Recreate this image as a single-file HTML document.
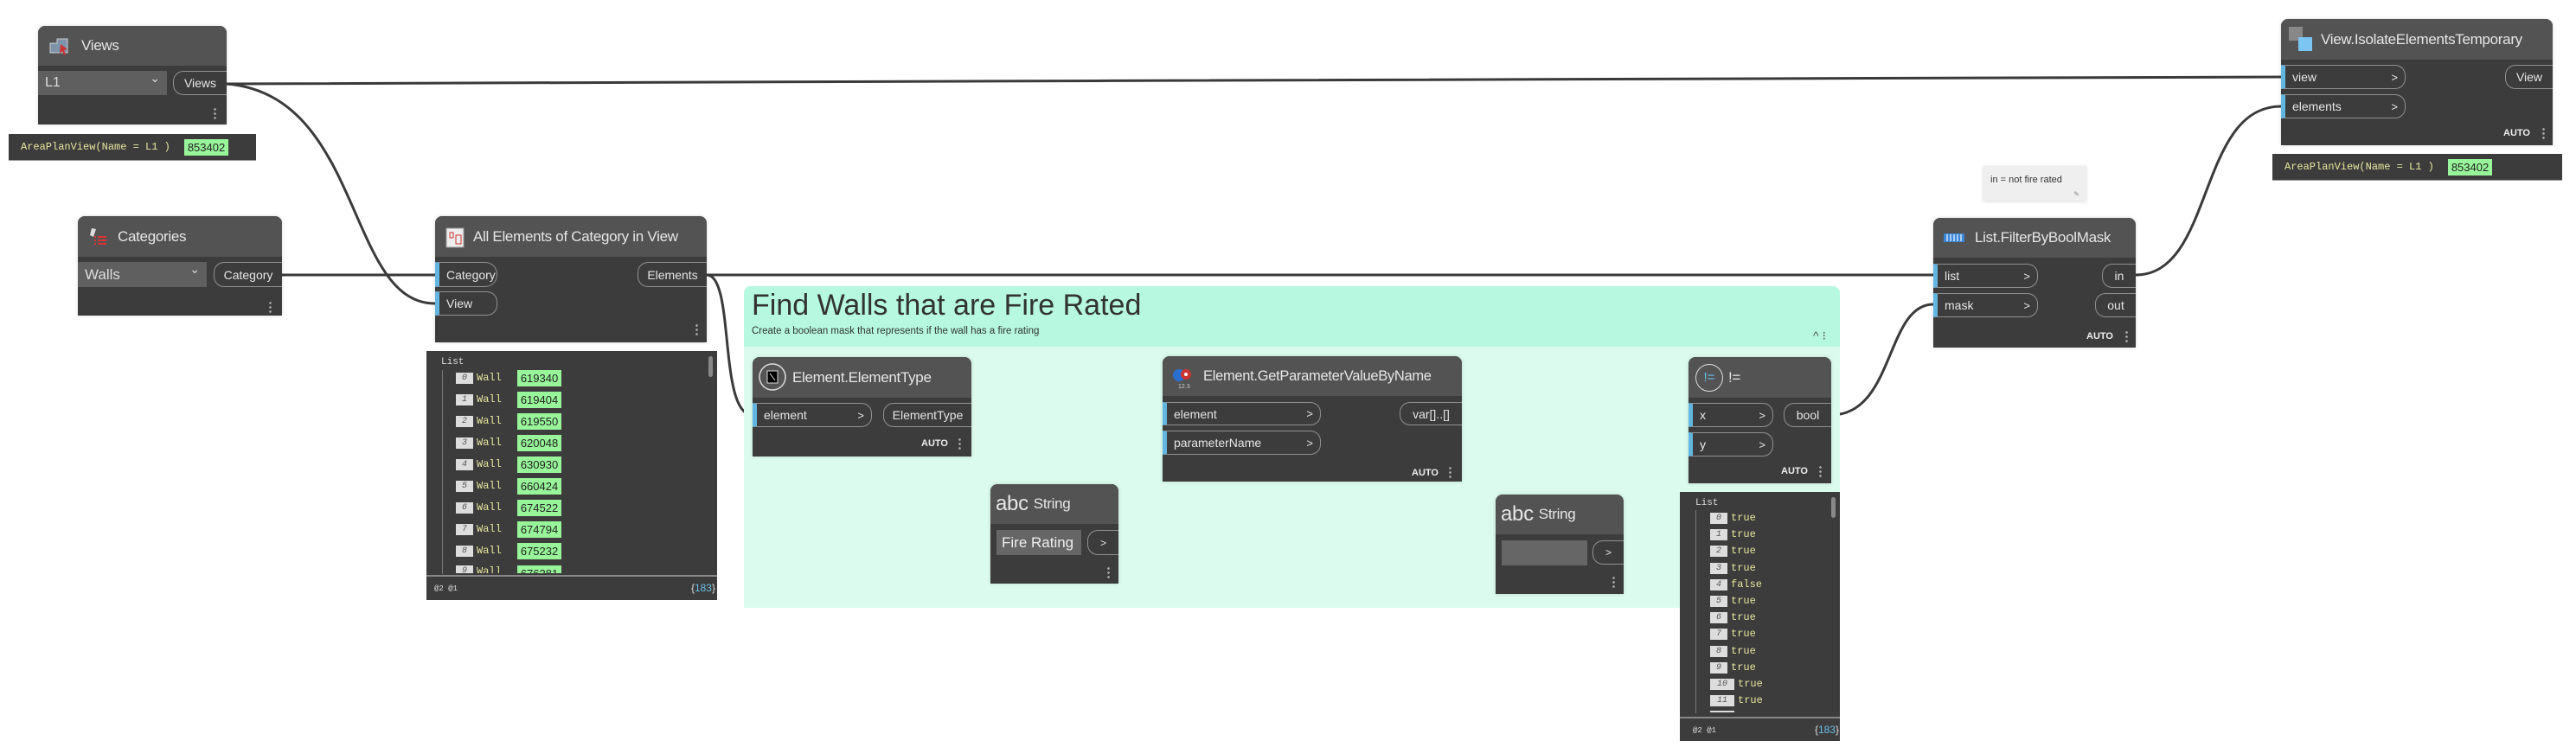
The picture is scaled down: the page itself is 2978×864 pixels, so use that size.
<!DOCTYPE html>
<html><head><meta charset="utf-8"><style>
*{box-sizing:border-box;margin:0;padding:0}
body{width:2978px;height:864px;background:#fff;position:relative;overflow:hidden;font-family:"Liberation Sans",sans-serif}
.a{position:absolute}
.node{position:absolute;background:#3c3c3c;border-radius:8px 8px 0 0;box-shadow:0 0 4px rgba(0,0,0,.15)}
.hd{position:absolute;left:0;right:0;top:0;background:#535353;border-radius:8px 8px 0 0;color:#e6e6e6;font-size:17px;display:flex;align-items:center;padding-left:14px;white-space:nowrap;letter-spacing:-0.3px}
.pin{position:absolute;border:1px solid #909090;border-left:5px solid #62b6e0;border-radius:0 12px 12px 0;color:#e6e6e6;font-size:14px;padding-left:8px;display:flex;align-items:center}
.pin:after{content:">";position:absolute;right:8px;font-size:13px}
.pin.n:after{content:""}
.pout{position:absolute;border:1px solid #909090;border-right:none;border-radius:12px 0 0 12px;color:#e6e6e6;font-size:14px;display:flex;align-items:center;justify-content:center}
.auto{position:absolute;color:#eee;font-size:11px;font-weight:bold}
.dots{position:absolute;width:3px;height:14px;background:radial-gradient(circle,#aaa 1.2px,transparent 1.5px) 0 0/3px 5px repeat-y}
.dd{position:absolute;background:#5f5f5f;color:#ddd;font-size:16px;display:flex;align-items:center;padding-left:8px}
.dd:after{content:"⌄";position:absolute;right:8px;top:0;font-size:14px}
.watch{position:absolute;background:#3c3c3c;color:#e8e8a0;font-family:"Liberation Mono",monospace;font-size:12px;display:flex;align-items:center;padding-left:14px;border-bottom:1px solid #999}
.g{background:#98f59a;color:#222;font-family:"Liberation Sans",sans-serif;padding:2px 4px;margin-left:18px;font-size:13px}
.list{position:absolute;background:#3c3c3c;font-family:"Liberation Mono",monospace;font-size:11px;color:#ddd}
.row{position:absolute;display:flex;align-items:center;height:16px}
.ix{background:#ddd;color:#555;font-style:italic;font-size:10px;width:20px;text-align:center;height:13px;line-height:13px;margin-right:4px}
.y{color:#e8e8a0;font-size:12px}
</style></head><body>

<svg class="a" style="left:0;top:0" width="2978" height="864" fill="none" stroke="#3a3a3a" stroke-width="3">
<path d="M262 97 C1000 95 2000 90 2637 89"/>
<path d="M262 97 C420 110 400 351 503 351"/>
<path d="M326 318 L503 318"/>
<path d="M817 318 C1400 318 1800 318 2235 318"/>
<path d="M817 318 C850 318 830 480 870 480"/>
<path d="M1123 480 L1344 479"/>
<path d="M1293 627 C1330 627 1310 512 1344 512"/>
<path d="M1690 479 L1952 480"/>
<path d="M1877 640 C1930 640 1900 514 1952 514"/>
<path d="M2117 480 C2190 480 2180 352 2235 352"/>
<path d="M2469 318 C2560 318 2540 123 2637 123"/>
</svg>

<!-- group -->
<div class="a" style="left:860px;top:331px;width:1267px;height:372px;background:#dbfbee;border-radius:8px 8px 0 0"></div>
<div class="a" style="left:860px;top:331px;width:1267px;height:70px;background:#b6f8e0;border-radius:8px 8px 0 0"></div>
<div class="a" style="left:869px;top:334px;font-size:34px;color:#333">Find Walls that are Fire Rated</div>
<div class="a" style="left:869px;top:377px;font-size:11.5px;color:#333">Create a boolean mask that represents if the wall has a fire rating</div>
<div class="a" style="left:2096px;top:380px;font-size:14px;color:#555">^ ⁝</div>

<!-- Views -->
<div class="node" style="left:44px;top:30px;width:218px;height:114px"><div class="hd" style="height:46px;padding-left:50px">Views</div>
<svg class="a" style="left:12px;top:12px" width="26" height="22"><path d="M2 8h8V3h12v16H2z" fill="#7c93aa" stroke="#ccc"/><path d="M14 9l8 6-4 1 2 5-2 1-2-5-3 3z" fill="#c33"/></svg>
<div class="dd" style="left:0;top:52px;width:149px;height:28px">L1</div>
<div class="pout" style="left:156px;top:52px;width:62px;height:28px">Views</div>
<div class="dots" style="left:203px;top:94px"></div></div>
<div class="watch" style="left:10px;top:155px;width:286px;height:31px">AreaPlanView(Name = L1 )<span class="g" style="margin-left:16px">853402</span></div>

<!-- Categories -->
<div class="node" style="left:90px;top:250px;width:236px;height:115px"><div class="hd" style="height:47px;padding-left:46px">Categories</div>
<svg class="a" style="left:12px;top:12px" width="26" height="24"><path d="M4 2l5 1-3 9-4-2z" fill="#ddd"/><path d="M11 12h10M11 16h10M11 20h10M7 12h2M7 16h2M7 20h2" stroke="#d33" stroke-width="2"/></svg>
<div class="dd" style="left:0;top:53px;width:149px;height:29px;font-size:17px">Walls</div>
<div class="pout" style="left:157px;top:53px;width:79px;height:29px">Category</div>
<div class="dots" style="left:221px;top:98px"></div></div>

<!-- All Elements -->
<div class="node" style="left:503px;top:250px;width:314px;height:146px"><div class="hd" style="height:47px;padding-left:44px">All Elements of Category in View</div>
<svg class="a" style="left:9px;top:12px" width="28" height="26"><rect x="4" y="2" width="20" height="22" fill="#eee" stroke="#999"/><path d="M8 7h4v6H8zM15 10h6v10h-6z" stroke="#c33" fill="none"/></svg>
<div class="pin n" style="left:0;top:53px;width:72px;height:29px;border-radius:0 14px 14px 0">Category</div>
<div class="pin n" style="left:0;top:87px;width:72px;height:28px">View</div>
<div class="pout" style="left:234px;top:53px;width:80px;height:29px">Elements</div>
<div class="dots" style="left:301px;top:124px"></div></div>

<!-- List 1 -->
<div class="list" style="left:493px;top:406px;width:336px;height:288px">
<div class="a" style="left:17px;top:7px">List</div>
<div class="a" style="left:18px;top:22px;width:1px;height:236px;background:#777"></div>
<div class="a" style="left:326px;top:6px;width:5px;height:24px;background:#888;border-radius:3px"></div>
<div class="row" style="left:34px;top:23px"><span class="ix">0</span><span class="y">Wall</span><span class="g">619340</span></div>
<div class="row" style="left:34px;top:48px"><span class="ix">1</span><span class="y">Wall</span><span class="g">619404</span></div>
<div class="row" style="left:34px;top:73px"><span class="ix">2</span><span class="y">Wall</span><span class="g">619550</span></div>
<div class="row" style="left:34px;top:98px"><span class="ix">3</span><span class="y">Wall</span><span class="g">620048</span></div>
<div class="row" style="left:34px;top:123px"><span class="ix">4</span><span class="y">Wall</span><span class="g">630930</span></div>
<div class="row" style="left:34px;top:148px"><span class="ix">5</span><span class="y">Wall</span><span class="g">660424</span></div>
<div class="row" style="left:34px;top:173px"><span class="ix">6</span><span class="y">Wall</span><span class="g">674522</span></div>
<div class="row" style="left:34px;top:198px"><span class="ix">7</span><span class="y">Wall</span><span class="g">674794</span></div>
<div class="row" style="left:34px;top:223px"><span class="ix">8</span><span class="y">Wall</span><span class="g">675232</span></div>
<div class="row" style="left:34px;top:248px;height:9px;overflow:hidden;align-items:flex-start"><span class="ix">9</span><span class="y">Wall</span><span class="g">676281</span></div>
<div class="a" style="left:0;top:259px;width:336px;height:2px;background:#888"></div>
<div class="a" style="left:9px;top:270px;font-size:9px">@2 @1</div>
<div class="a" style="right:2px;top:267px;font-size:12px;font-family:'Liberation Sans'">{<span style="color:#6ac0e7">183</span>}</div>
</div>

<!-- ElementType -->
<div class="node" style="left:870px;top:413px;width:253px;height:115px"><div class="hd" style="height:47px;padding-left:46px">Element.ElementType</div>
<svg class="a" style="left:6px;top:6px" width="34" height="34"><circle cx="17" cy="17" r="15" stroke="#ddd" stroke-width="1.5" fill="#555"/><path d="M11 10h12v14H11zM14 13l6 8" stroke="#ddd"/></svg>
<div class="pin" style="left:0;top:53px;width:138px;height:28px">element</div>
<div class="pout" style="left:151px;top:53px;width:102px;height:28px">ElementType</div>
<div class="auto" style="left:195px;top:94px">AUTO</div><div class="dots" style="left:238px;top:93px"></div></div>

<!-- String 1 -->
<div class="node" style="left:1145px;top:560px;width:148px;height:115px"><div class="hd" style="height:46px;padding-left:6px"><span style="font-size:24px;font-weight:300;margin-right:6px">abc</span>String</div>
<div class="a" style="left:7px;top:53px;width:98px;height:29px;background:#666;color:#eee;font-size:17px;padding-left:6px;line-height:29px;white-space:nowrap">Fire Rating</div>
<div class="pout" style="left:112px;top:53px;width:36px;height:29px;font-size:12px">&gt;</div>
<div class="dots" style="left:135px;top:95px"></div></div>

<!-- GetParameterValueByName -->
<div class="node" style="left:1344px;top:412px;width:346px;height:145px"><div class="hd" style="height:46px;padding-left:47px;font-size:16.5px">Element.GetParameterValueByName</div>
<svg class="a" style="left:10px;top:12px" width="26" height="26"><circle cx="9" cy="10" r="7" fill="#2a6fd0"/><circle cx="17" cy="9" r="6" fill="#c33"/><circle cx="17" cy="9" r="2" fill="#fff"/><text x="8" y="25" font-size="7" fill="#ccc">12.3</text></svg>
<div class="pin" style="left:0;top:53px;width:183px;height:27px">element</div>
<div class="pin" style="left:0;top:86px;width:183px;height:28px">parameterName</div>
<div class="pout" style="left:274px;top:53px;width:72px;height:27px">var[]..[]</div>
<div class="auto" style="left:288px;top:129px">AUTO</div><div class="dots" style="left:331px;top:127px"></div></div>

<!-- != -->
<div class="node" style="left:1952px;top:413px;width:165px;height:146px"><div class="hd" style="height:47px;padding-left:46px">!=</div>
<div class="a" style="left:8px;top:8px;width:32px;height:32px;border:1.5px solid #ddd;border-radius:50%;color:#6ac0e7;font-size:15px;text-align:center;line-height:29px">!=</div>
<div class="pin" style="left:0;top:53px;width:98px;height:28px">x</div>
<div class="pin" style="left:0;top:87px;width:98px;height:28px">y</div>
<div class="pout" style="left:110px;top:53px;width:55px;height:28px">bool</div>
<div class="auto" style="left:107px;top:126px">AUTO</div><div class="dots" style="left:151px;top:125px"></div></div>

<!-- String 2 -->
<div class="node" style="left:1729px;top:572px;width:148px;height:115px"><div class="hd" style="height:46px;padding-left:6px"><span style="font-size:24px;font-weight:300;margin-right:6px">abc</span>String</div>
<div class="a" style="left:7px;top:53px;width:99px;height:29px;background:#666"></div>
<div class="pout" style="left:112px;top:53px;width:36px;height:28px;font-size:12px">&gt;</div>
<div class="dots" style="left:135px;top:94px"></div></div>

<!-- List 2 -->
<div class="list" style="left:1942px;top:569px;width:185px;height:288px">
<div class="a" style="left:18px;top:7px">List</div>
<div class="a" style="left:18px;top:21px;width:1px;height:235px;background:#777"></div>
<div class="a" style="left:175px;top:6px;width:5px;height:24px;background:#888;border-radius:3px"></div>
<div class="row" style="left:35px;top:22px"><span class="ix">0</span><span class="y">true</span></div>
<div class="row" style="left:35px;top:41px"><span class="ix">1</span><span class="y">true</span></div>
<div class="row" style="left:35px;top:60px"><span class="ix">2</span><span class="y">true</span></div>
<div class="row" style="left:35px;top:80px"><span class="ix">3</span><span class="y">true</span></div>
<div class="row" style="left:35px;top:99px"><span class="ix">4</span><span class="y">false</span></div>
<div class="row" style="left:35px;top:118px"><span class="ix">5</span><span class="y">true</span></div>
<div class="row" style="left:35px;top:137px"><span class="ix">6</span><span class="y">true</span></div>
<div class="row" style="left:35px;top:156px"><span class="ix">7</span><span class="y">true</span></div>
<div class="row" style="left:35px;top:176px"><span class="ix">8</span><span class="y">true</span></div>
<div class="row" style="left:35px;top:195px"><span class="ix">9</span><span class="y">true</span></div>
<div class="row" style="left:35px;top:214px"><span class="ix" style="width:28px">10</span><span class="y">true</span></div>
<div class="row" style="left:35px;top:233px"><span class="ix" style="width:28px">11</span><span class="y">true</span></div>
<div class="a" style="left:35px;top:253px;width:28px;height:2px;background:#ddd"></div>
<div class="a" style="left:0;top:260px;width:185px;height:2px;background:#888"></div>
<div class="a" style="left:15px;top:271px;font-size:9px">@2 @1</div>
<div class="a" style="right:1px;top:268px;font-size:12px;font-family:'Liberation Sans'">{<span style="color:#6ac0e7">183</span>}</div>
</div>

<!-- note -->
<div class="a" style="left:2293px;top:192px;width:119px;height:40px;background:#efefef;box-shadow:0 1px 4px rgba(0,0,0,.15);font-size:11px;color:#333;padding:10px 0 0 8px">in = not fire rated<span style="position:absolute;right:8px;bottom:3px;font-size:8px;color:#888">✎</span></div>

<!-- FilterByBoolMask -->
<div class="node" style="left:2235px;top:252px;width:234px;height:150px"><div class="hd" style="height:46px;padding-left:48px">List.FilterByBoolMask</div>
<svg class="a" style="left:12px;top:18px" width="24" height="10"><rect x="0" y="0" width="24" height="10" fill="#3b86d6"/><path d="M4 1v8M8 1v8M12 1v8M16 1v8M20 1v8" stroke="#cfe6ff" stroke-width="1.5"/></svg>
<div class="pin" style="left:0;top:53px;width:121px;height:28px">list</div>
<div class="pin" style="left:0;top:87px;width:121px;height:28px">mask</div>
<div class="pout" style="left:195px;top:53px;width:39px;height:28px">in</div>
<div class="pout" style="left:187px;top:87px;width:47px;height:28px">out</div>
<div class="auto" style="left:177px;top:131px">AUTO</div><div class="dots" style="left:222px;top:130px"></div></div>

<!-- IsolateElementsTemporary -->
<div class="node" style="left:2637px;top:22px;width:314px;height:146px"><div class="hd" style="height:47px;padding-left:46px">View.IsolateElementsTemporary</div>
<svg class="a" style="left:8px;top:7px" width="30" height="32"><rect x="1" y="2" width="16" height="16" fill="#888"/><rect x="12" y="14" width="16" height="16" fill="#7cc4f2"/></svg>
<div class="pin" style="left:0;top:53px;width:144px;height:28px">view</div>
<div class="pin" style="left:0;top:87px;width:144px;height:28px">elements</div>
<div class="pout" style="left:259px;top:53px;width:55px;height:28px">View</div>
<div class="auto" style="left:257px;top:126px">AUTO</div><div class="dots" style="left:302px;top:125px"></div></div>
<div class="watch" style="left:2627px;top:178px;width:335px;height:31px">AreaPlanView(Name = L1 )<span class="g" style="margin-left:16px">853402</span></div>

</body></html>
